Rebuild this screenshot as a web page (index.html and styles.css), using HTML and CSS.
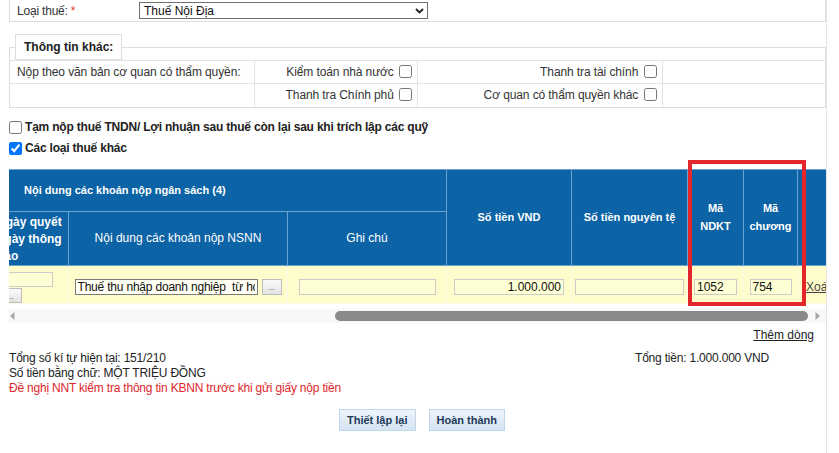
FILE: index.html
```html
<!DOCTYPE html>
<html lang="vi">
<head>
<meta charset="utf-8">
<title>Nộp thuế</title>
<link rel="stylesheet" href="styles.css">
</head>
<body>
<div class="page">
  <div class="tax-type">
    <span class="tax-label">Loại thuế: <span class="req">*</span></span>
    <div class="select">
      <span>Thuế Nội Địa</span>
      <svg class="chev" width="9" height="6" viewBox="0 0 9 6"><path d="M1 1 L4.5 4.5 L8 1" fill="none" stroke="#222" stroke-width="1.8"/></svg>
    </div>
  </div>

  <fieldset class="other">
    <legend>Thông tin khác:</legend>
    <table class="other-table">
      <colgroup><col class="w30"><col class="w20"><col class="w30"><col class="w20"></colgroup>
      <tr>
        <td>Nộp theo văn bản cơ quan có thẩm quyền:</td>
        <td class="r">Kiểm toán nhà nước <input type="checkbox"></td>
        <td class="r">Thanh tra tài chính <input type="checkbox"></td>
        <td></td>
      </tr>
      <tr>
        <td></td>
        <td class="r">Thanh tra Chính phủ <input type="checkbox"></td>
        <td class="r">Cơ quan có thẩm quyền khác <input type="checkbox"></td>
        <td></td>
      </tr>
    </table>
  </fieldset>

  <div class="opts">
    <label class="opt"><input type="checkbox">Tạm nộp thuế TNDN/ Lợi nhuận sau thuế còn lại sau khi trích lập các quỹ</label>
    <label class="opt"><input type="checkbox" checked>Các loại thuế khác</label>
  </div>

  <div class="grid-wrap">
    <div class="grid-scroll">
      <table class="grid">
        <colgroup>
          <col class="ca"><col class="cb"><col class="cc"><col class="cd"><col class="ce"><col class="cf"><col class="cg"><col class="ch">
        </colgroup>
        <thead>
          <tr class="h1">
            <th colspan="3" class="group">Nội dung các khoản nộp ngân sách (4)</th>
            <th rowspan="2">Số tiền VND</th>
            <th rowspan="2">Số tiền nguyên tệ</th>
            <th rowspan="2">Mã<br>NDKT</th>
            <th rowspan="2">Mã<br>chương</th>
            <th rowspan="2"></th>
          </tr>
          <tr class="h2">
            <th class="date">Ngày quyết<br>ngày thông<br>báo</th>
            <th class="norm">Nội dung các khoản nộp NSNN</th>
            <th class="norm">Ghi chú</th>
          </tr>
        </thead>
        <tbody>
          <tr class="data">
            <td class="left first"><input class="in date-in" type="text"><br><button class="dots" type="button">...</button></td>
            <td><input class="in nsnn" type="text" value="Thuế thu nhập doanh nghiệp  từ hoạt động sản xuất kinh doanh"><button class="dots b" type="button">...</button></td>
            <td><input class="in note" type="text"></td>
            <td><input class="in vnd" type="text" value="1.000.000"></td>
            <td><input class="in fx" type="text"></td>
            <td><input class="in ndkt" type="text" value="1052"></td>
            <td><input class="in chuong" type="text" value="754"></td>
            <td class="left del"><a href="#">Xoá</a></td>
          </tr>
        </tbody>
      </table>
    </div>
    <div class="hscroll">
      <svg class="arr" width="5" height="8" viewBox="0 0 5 8"><path d="M4.5 0 L0 4 L4.5 8 Z" fill="#a5a5a5"/></svg>
      <div class="track"><div class="thumb"></div></div>
      <svg class="arr" width="5" height="8" viewBox="0 0 5 8"><path d="M0.5 0 L5 4 L0.5 8 Z" fill="#a5a5a5"/></svg>
    </div>
    <div class="highlight"></div>
  </div>

  <div class="add-row"><a href="#">Thêm dòng</a></div>

  <div class="summary">
    <div class="sum-left">
      <div>Tổng số kí tự hiện tại: 151/210</div>
      <div>Số tiền bằng chữ: MỘT TRIỆU ĐỒNG</div>
      <div class="warn">Đề nghị NNT kiểm tra thông tin KBNN trước khi gửi giấy nộp tiền</div>
    </div>
    <div class="sum-right">Tổng tiền: 1.000.000 VND</div>
  </div>

  <div class="actions">
    <button type="button" class="btn">Thiết lập lại</button>
    <button type="button" class="btn">Hoàn thành</button>
  </div>
</div>
</body>
</html>
```

FILE: styles.css
```css
* { box-sizing: border-box; }
html, body { margin: 0; padding: 0; background: #fff; }
body {
  font-family: "Liberation Sans", Arial, sans-serif;
  font-size: 12px;
  color: #333;
}
.page {
  margin-left: 9px;
  width: 818px;
  min-height: 453px;
  border-right: 1px solid #e4e4e4;
}

/* Loai thue row */
.tax-type {
  display: flex;
  align-items: center;
  height: 22px;
  border: 1px solid #dedede;
  border-top: 0;
  padding-left: 7px;
}
.tax-label { width: 122px; color: #333; letter-spacing: -0.2px; }
.req { color: #e53935; }
.select {
  display: flex;
  align-items: center;
  justify-content: space-between;
  width: 289px;
  height: 17px;
  border: 1px solid #6f6f6f;
  padding: 0 3px 0 4px;
  color: #111;
  background: #fff;
}
.chev { display: block; }

/* Thong tin khac */
.other {
  margin: 12px 0 0;
  padding: 0;
  border: 1px solid #dedede;
  min-width: 0;
}
.other legend {
  margin-left: 5px;
  padding: 0 8px;
  height: 26px;
  line-height: 24px;
  border: 1px solid #dedede;
  font-weight: bold;
  font-size: 12px;
  color: #222;
}
.other-table {
  width: 100%;
  border-collapse: collapse;
  table-layout: fixed;
}
.w30 { width: 30%; }
.w20 { width: 20%; }
.other-table td {
  height: 23px;
  padding: 0 6px 0 7px;
  border-top: 1px solid #e3e3e3;
  border-left: 1px solid #e3e3e3;
  white-space: nowrap;
  vertical-align: middle;
  letter-spacing: -0.1px;
}
.other-table td:first-child { border-left: 0; }
.other-table td.r { text-align: right; padding-right: 5px; }
.other-table input {
  margin: 0 0 0 2px;
  width: 13px;
  height: 13px;
  vertical-align: -2px;
}

/* options */
.opts { padding-top: 9px; }
.opt {
  display: flex;
  align-items: center;
  height: 21px;
  font-weight: bold;
  color: #222;
  letter-spacing: -0.2px;
}
.opt input { margin: 0 3px 0 0; width: 13px; height: 13px; }

/* grid */
.grid-wrap { position: relative; margin-top: 10px; }
.grid-scroll { overflow: hidden; width: 817px; }
.grid {
  table-layout: fixed;
  width: 849px;
  margin-left: -21px;
  border-collapse: collapse;
}
.ca { width: 80px; }
.cb { width: 219px; }
.cc { width: 159px; }
.cd { width: 125px; }
.ce { width: 116px; }
.cf { width: 56px; }
.cg { width: 54px; }
.ch { width: 40px; }
.grid th {
  background: #0c63a5;
  color: #fff;
  font-weight: bold;
  font-size: 11px;
  line-height: 18px;
  text-align: center;
  border: 1px solid #6aa3d2;
  padding: 0 2px;
}
.grid tr.h1 th { height: 42px; }
.grid tr.h2 th { height: 54px; }
.grid th.group { text-align: left; padding-left: 35px; }
.grid th.date { text-align: left; font-size: 12px; line-height: 17px; padding: 2px 0 0 8px; white-space: nowrap; }
.grid th.norm { font-weight: normal; font-size: 12px; }
.grid td {
  background: #fffccc;
  height: 38px;
  border: 1px solid #fbf8e6;
  text-align: center;
  vertical-align: middle;
  padding: 6px 0 0;
  white-space: nowrap;
}
.grid td.left { text-align: left; padding-left: 2px; }
.grid td.first { padding-left: 10px; }
.in {
  height: 16px;
  border: 1px solid #cbcbcb;
  background: #ffffd6;
  font-family: "Liberation Sans", Arial, sans-serif;
  font-size: 12px;
  color: #111;
  padding: 0 2px;
  margin: 0;
  vertical-align: middle;
}
.date-in { width: 54px; height: 15px; }
.nsnn { width: 183px; border-color: #7a7a7a; background: #fffff4; letter-spacing: -0.2px; }
.note { width: 137px; }
.vnd { width: 110px; text-align: right; }
.fx { width: 109px; }
.ndkt { width: 43px; }
.chuong { width: 42px; }
.dots {
  width: 23px;
  height: 15px;
  margin: 1px 0 0;
  padding: 0;
  border: 1px solid #bdbdbd;
  background: linear-gradient(#fafafa, #e3e3e3);
  font-size: 8px;
  line-height: 16px;
  color: #555;
  vertical-align: middle;
}
.dots.b { width: 20px; height: 16px; margin: 0 0 0 4px; }
.del { padding-left: 8px !important; }
.del a { color: #444; text-decoration: underline; }

/* fake horizontal scrollbar */
.hscroll {
  display: flex;
  align-items: center;
  height: 14px;
  margin-top: 5px;
  padding: 0 6px 0 1px;
  background: #f8f8f8;
}
.arr { display: block; flex: none; }
.track { flex: 1; margin: 0 6px; height: 10px; }
.thumb {
  margin-left: 314px;
  width: 473px;
  height: 10px;
  border-radius: 5px;
  background: #8a8a8a;
}
.highlight {
  position: absolute;
  left: 679px;
  top: -9px;
  width: 118px;
  height: 146px;
  border: 4px solid #e3262b;
  pointer-events: none;
}

.add-row {
  margin-top: 5px;
  line-height: 15px;
  text-align: right;
  padding-right: 12px;
}
.add-row a { color: #222; text-decoration: underline; }

.summary {
  display: flex;
  margin-top: 8px;
  line-height: 15px;
  color: #222;
  letter-spacing: -0.2px;
}
.sum-left { width: 626px; }
.warn { color: #e0262b; }

.actions {
  display: flex;
  justify-content: center;
  gap: 13px;
  margin-top: 13px;
  padding-left: 9px;
}
.btn {
  height: 22px;
  padding: 0 7px;
  border: 1px solid #c3d7ea;
  background: linear-gradient(#edf4fb, #d4e4f4);
  font-family: "Liberation Sans", Arial, sans-serif;
  font-size: 11px;
  font-weight: bold;
  color: #1f3a56;
}
```
